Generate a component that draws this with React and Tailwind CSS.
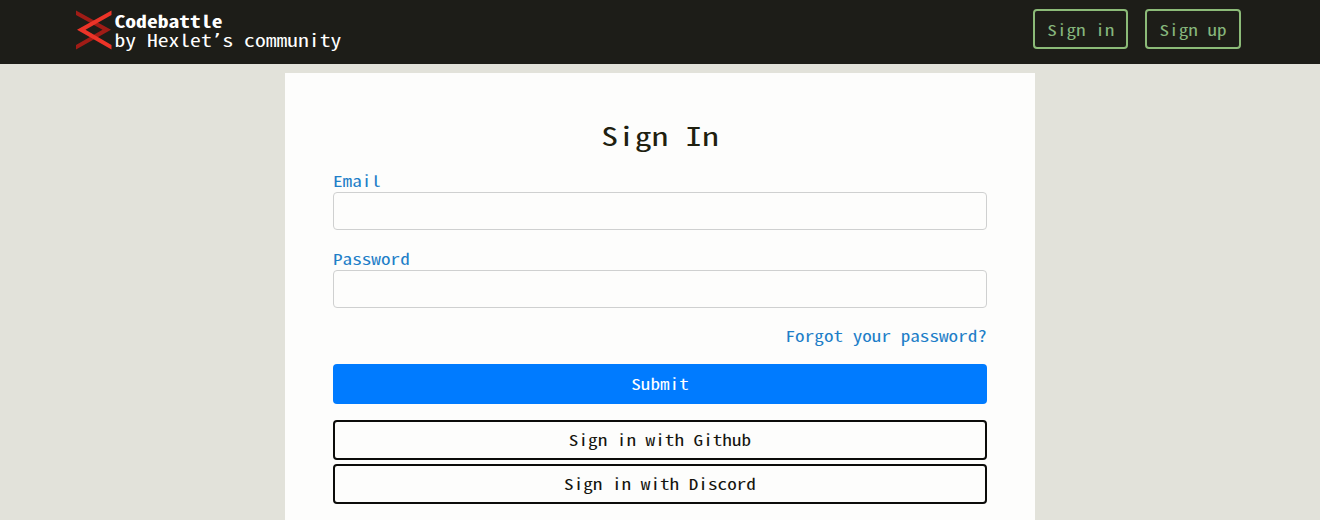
const mono = "font-['Noto_Sans_Mono_CJK_SC','Liberation_Mono',monospace]";

// Widens the narrow CJK monospace Latin glyphs by flattening them vertically.
function Flat({ children, className = "" }) {
  return <span className={`inline-block origin-center scale-y-[0.78] whitespace-pre ${className}`}>{children}</span>;
}

function Logo() {
  return (
    <svg width="36" height="40" viewBox="0 0 36 40" className="block shrink-0">
      <path d="M0 .5 35 19.8 0 39.5V35L26.5 19.8 0 5Z" fill="#a01c16" />
      <path d="M35.5 .5V5L9.5 19.8 35.5 35V39.5L1 19.8Z" fill="#ec3428" />
    </svg>
  );
}

function NavButton({ children }) {
  return (
    <a href="#" className="flex h-10 items-center rounded border-2 border-[#8cbb78] px-3 text-[19.2px] leading-6 text-[#86b67c]">
      <Flat className="translate-y-[0.3px]">{children}</Flat>
    </a>
  );
}

function Field({ label, type }) {
  return (
    <label className="mb-4 block text-[19.2px] leading-[24px] text-[#1f7fc8]">
      <span className="block h-6"><Flat className="translate-y-[0.3px]">{label}</Flat></span>
      <input type={type} className="block h-[38px] w-full rounded border border-[#cfd0d0] bg-transparent px-3 text-black" />
    </label>
  );
}

function ProviderButton({ children }) {
  return (
    <button className="mb-1 flex h-10 w-full items-center justify-center rounded border-2 border-[#0c0c0a] text-[19.2px] leading-6 text-[#15150f]">
      <Flat>{children}</Flat>
    </button>
  );
}

export default function App() {
  return (
    <div className={`h-[520px] overflow-hidden bg-[#e2e2da] ${mono}`}>
      <header className="flex h-16 items-start justify-between bg-[#1d1d18] pl-[76px] pr-[79.4px]">
        <a href="#" className="flex pt-[10px] text-white">
          <Logo />
          <span className="ml-[2.5px] mt-[2px] block text-[21.6px] leading-[18px]">
            <b className="block h-[18px]"><Flat className="-translate-y-[0.5px]">Codebattle</Flat></b>
            <span className="block h-[18px]">
              <Flat className="-translate-y-px">
                by Hexlet<span className="inline-block w-[10.8px] text-center font-['DejaVu_Sans',sans-serif] text-[24px] leading-none">’</span>s community
              </Flat>
            </span>
          </span>
        </a>
        <nav className="flex gap-[17px] pt-[9px]">
          <NavButton>Sign in</NavButton>
          <NavButton>Sign up</NavButton>
        </nav>
      </header>
      <main className="mx-auto mt-[9px] h-[460px] w-[750px] bg-[#fdfdfc] px-12 pt-[45px]">
        <h1 className="mb-4 h-[34px] text-center text-[33.6px] leading-[34px] text-[#20200f]"><Flat>Sign In</Flat></h1>
        <Field label="Email" type="email" />
        <Field label="Password" type="password" />
        <div className="mb-4 text-right text-[19.2px] leading-6 text-[#1f7fc8]">
          <a href="#"><Flat>Forgot your password?</Flat></a>
        </div>
        <button className="mb-4 flex h-10 w-full items-center justify-center rounded bg-[#007bff] text-[19.2px] leading-6 text-white">
          <Flat>Submit</Flat>
        </button>
        <ProviderButton>Sign in with Github</ProviderButton>
        <ProviderButton>Sign in with Discord</ProviderButton>
      </main>
    </div>
  );
}
